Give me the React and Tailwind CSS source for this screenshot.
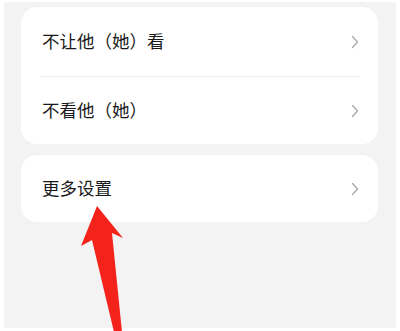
import React from "react";

function Chevron() {
  return (
    <svg width="8" height="14" viewBox="0 0 8 14" className="shrink-0">
      <path d="M1.5 1.5 L6.5 7 L1.5 12.5" fill="none" stroke="#a8a8a8" strokeWidth="1.3" strokeLinecap="round" strokeLinejoin="round" />
    </svg>
  );
}

function Row({ label, h = "h-[68px]" }) {
  return (
    <div className={`flex items-center justify-between ${h} pl-[21px] pr-[19px]`}>
      <span className="text-[17.5px] text-[#1a1a1a]">{label}</span>
      <Chevron />
    </div>
  );
}

export default function App() {
  return (
    <div
      className="relative w-[400px] h-[331px] bg-white pt-[2px] pl-[4px] pr-[4px] pb-[3px] overflow-hidden"
      style={{ fontFamily: '"Noto Sans CJK SC", "Noto Sans", sans-serif' }}
    >
      <div className="h-full bg-[#f3f3f3] pl-[17px] pr-[18px] pt-[5px] flex flex-col gap-[11px]">
        <div className="bg-white rounded-[16px] flex flex-col">
          <Row label="不让他（她）看" h="h-[69px]" />
          <div className="mx-[19px] h-px bg-[#ececec]" />
          <Row label="不看他（她）" h="h-[67px]" />
        </div>
        <div className="bg-white rounded-[16px]">
          <Row label="更多设置" h="h-[67px]" />
        </div>
      </div>
      <svg className="absolute left-0 top-0" width="400" height="331" viewBox="0 0 400 331">
        <polygon points="97,206 123,238 112,233 122,332 114,332 92,240 81,246" fill="#f3231c" />
      </svg>
    </div>
  );
}
